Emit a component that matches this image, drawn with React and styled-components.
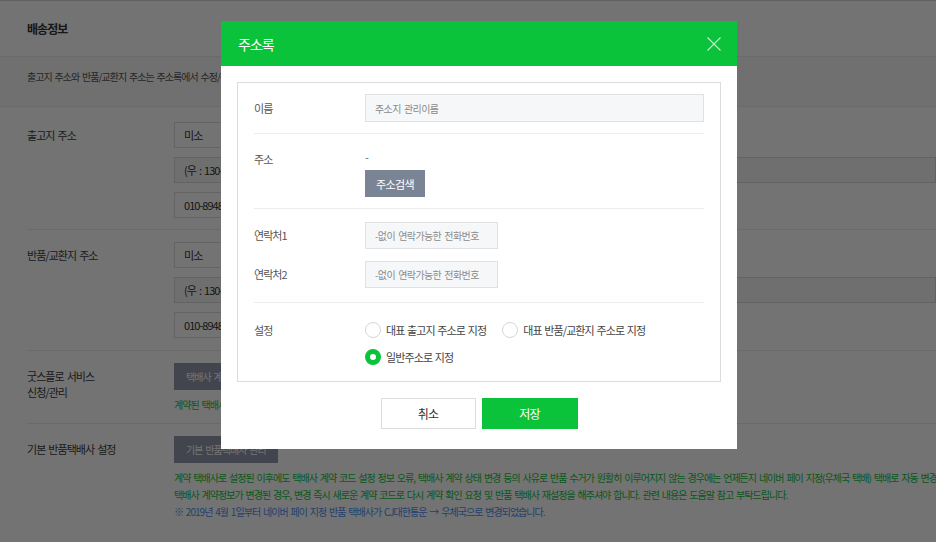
import React from 'react';
import styled, { createGlobalStyle } from 'styled-components';

const GlobalStyle = createGlobalStyle`
  html, body {
    margin: 0;
    padding: 0;
  }
  body {
    width: 936px;
    height: 542px;
    overflow: hidden;
    background: #fff;
    font-family: "Noto Sans CJK KR", "Noto Sans", sans-serif;
    color: #444;
    letter-spacing: -0.06em;
    word-spacing: 1.5px;
  }
  * {
    box-sizing: border-box;
  }
`;

const ShippingInfo = () => (
  <Page>
    <SectionHead>배송정보</SectionHead>
    <Notice>출고지 주소와 반품/교환지 주소는 주소록에서 수정/관리할 수 있습니다.</Notice>

    <FormRow $pad="15px 0 11px">
      <RowLabel>출고지 주소</RowLabel>
      <RowBody>
        <Field $w="300px">미소</Field>
        <Field $readonly>(우 : 130-070)</Field>
        <Field $w="300px">010-8948-0000</Field>
      </RowBody>
    </FormRow>

    <FormRow $pad="12px 0">
      <RowLabel>반품/교환지 주소</RowLabel>
      <RowBody>
        <Field $w="300px">미소</Field>
        <Field $readonly>(우 : 130-070)</Field>
        <Field $w="300px">010-8948-0000</Field>
      </RowBody>
    </FormRow>

    <FormRow $pad="12px 0 10px">
      <RowLabel>
        굿스플로 서비스
        <br />
        신청/관리
      </RowLabel>
      <RowBody>
        <DarkButton>택배사 계약 신청</DarkButton>
        <HelpText>
          <GreenLine>계약된 택배사가 없습니다.</GreenLine>
        </HelpText>
      </RowBody>
    </FormRow>

    <FormRow $pad="12px 0" $last>
      <RowLabel>기본 반품택배사 설정</RowLabel>
      <RowBody>
        <DarkButton>기본 반품택배사 관리</DarkButton>
        <HelpText>
          <GreenLine>
            계약 택배사로 설정된 이후에도 택배사 계약 코드 설정 정보 오류, 택배사 계약 상태 변경 등의 사유로 반품 수거가
            원활히 이루어지지 않는 경우에는 언제든지 네이버 페이 지정(우체국 택배) 택배로 자동 변경됩니다.
          </GreenLine>
          <GreenLine>
            택배사 계약정보가 변경된 경우, 변경 즉시 새로운 계약 코드로 다시 계약 확인 요청 및 반품 택배사 재설정을
            해주셔야 합니다. 관련 내용은 도움말 참고 부탁드립니다.
          </GreenLine>
          <BlueLine>※ 2019년 4월 1일부터 네이버 페이 지정 반품 택배사가 CJ대한통운 → 우체국으로 변경되었습니다.</BlueLine>
        </HelpText>
      </RowBody>
    </FormRow>
  </Page>
);

const CloseIcon = () => (
  <svg width="14" height="14" viewBox="0 0 14 14">
    <path d="M0.5 0.5 L13.5 13.5 M13.5 0.5 L0.5 13.5" stroke="rgba(255,255,255,0.75)" strokeWidth="1.1" fill="none" />
  </svg>
);

const AddressBookModal = () => (
  <Modal>
    <ModalHead>
      <ModalTitle>주소록</ModalTitle>
      <CloseButton type="button">
        <CloseIcon />
      </CloseButton>
    </ModalHead>
    <ModalBody>
      <FieldBox>
        <BoxRow $pad="11px 0">
          <Line>
            <BoxLabel>이름</BoxLabel>
            <BoxInput $w="339px" $h="28px" placeholder="주소지 관리이름" />
          </Line>
        </BoxRow>

        <BoxRow $pad="12px 0 11px">
          <Line>
            <BoxLabel $lh="26px">주소</BoxLabel>
            <AddressCol>
              <Dash>-</Dash>
              <SearchButton type="button">주소검색</SearchButton>
            </AddressCol>
          </Line>
        </BoxRow>

        <BoxRow $pad="13px 0 14px" $gap="12px">
          <Line>
            <BoxLabel $lh="27px">연락처1</BoxLabel>
            <BoxInput $w="133px" $h="27px" placeholder="-없이 연락가능한 전화번호" />
          </Line>
          <Line>
            <BoxLabel $lh="27px">연락처2</BoxLabel>
            <BoxInput $w="133px" $h="27px" placeholder="-없이 연락가능한 전화번호" />
          </Line>
        </BoxRow>

        <BoxRow $pad="19px 0 16px" $last>
          <Line>
            <BoxLabel $lh="16px">설정</BoxLabel>
            <RadioGroup>
              <RadioLine>
                <RadioOption>
                  <RadioDot />
                  대표 출고지 주소로 지정
                </RadioOption>
                <RadioOption>
                  <RadioDot />
                  대표 반품/교환지 주소로 지정
                </RadioOption>
              </RadioLine>
              <RadioLine>
                <RadioOption>
                  <RadioDot $checked />
                  일반주소로 지정
                </RadioOption>
              </RadioLine>
            </RadioGroup>
          </Line>
        </BoxRow>
      </FieldBox>

      <Actions>
        <CancelButton type="button">취소</CancelButton>
        <SaveButton type="button">저장</SaveButton>
      </Actions>
    </ModalBody>
  </Modal>
);

const App = () => (
  <>
    <GlobalStyle />
    <ShippingInfo />
    <Dim />
    <AddressBookModal />
  </>
);

export default App;

/* background page */
const Page = styled.div`
  width: 936px;
  height: 542px;
  border-top: 1px solid #d8d8d8;
`;
const SectionHead = styled.div`
  height: 56px;
  padding-left: 27px;
  display: flex;
  align-items: center;
  font-size: 12px;
  font-weight: bold;
  color: #333;
  border-bottom: 1px solid #ebebeb;
`;
const Notice = styled.div`
  height: 50px;
  padding: 11px 27px 0;
  line-height: 18px;
  font-size: 10px;
  color: #555;
  background: #f8f8f8;
  border-bottom: 1px solid #ebebeb;
`;
const FormRow = styled.div`
  display: flex;
  margin-left: 27px;
  padding: ${(p) => p.$pad};
  border-bottom: ${(p) => (p.$last ? 'none' : '1px solid #ebebeb')};
`;
const RowLabel = styled.div`
  width: 147px;
  flex-shrink: 0;
  padding-top: 5px;
  line-height: 16px;
  font-size: 11px;
  color: #3c3c3c;
`;
const RowBody = styled.div`
  flex: 1;
  min-width: 0;
  display: flex;
  flex-direction: column;
  align-items: flex-start;
  gap: 9px;
`;
const Field = styled.div`
  width: ${(p) => p.$w || '100%'};
  height: 26px;
  padding: 0 9px;
  display: flex;
  align-items: center;
  font-size: 11px;
  color: #333;
  border: 1px solid #dcdcdc;
  background: ${(p) => (p.$readonly ? '#f6f6f6' : '#fff')};
  white-space: nowrap;
`;
const DarkButton = styled.div`
  height: 27px;
  padding: 0 12px;
  display: flex;
  align-items: center;
  font-size: 10px;
  color: #fff;
  background: #929aae;
`;
const HelpText = styled.div`
  margin-top: -3px;
  white-space: nowrap;
  font-size: 10px;
  line-height: 17px;
`;
const GreenLine = styled.div`
  color: #14c23c;
`;
const BlueLine = styled.div`
  color: #4f8ef0;
`;

const Dim = styled.div`
  position: fixed;
  inset: 0;
  background: rgba(0, 0, 0, 0.55);
`;

/* address book modal */
const Modal = styled.div`
  position: absolute;
  left: 221px;
  top: 21px;
  width: 516px;
  background: #fff;
`;
const ModalHead = styled.div`
  height: 45px;
  padding: 0 16px 0 17px;
  display: flex;
  align-items: center;
  justify-content: space-between;
  background: #0bc23b;
`;
const ModalTitle = styled.h2`
  margin: 0;
  font-size: 14px;
  font-weight: normal;
  color: #fff;
`;
const CloseButton = styled.button`
  padding: 0;
  border: 0;
  background: none;
  display: flex;
`;
const ModalBody = styled.div`
  padding: 16px 16px 20px;
`;
const FieldBox = styled.div`
  padding: 0 16px;
  border: 1px solid #dcdcdc;
`;
const BoxRow = styled.div`
  display: flex;
  flex-direction: column;
  gap: ${(p) => p.$gap || '0'};
  padding: ${(p) => p.$pad};
  border-bottom: ${(p) => (p.$last ? 'none' : '1px solid #ececec')};
`;
const Line = styled.div`
  display: flex;
  align-items: flex-start;
`;
const BoxLabel = styled.div`
  width: 111px;
  flex-shrink: 0;
  line-height: ${(p) => p.$lh || '28px'};
  font-size: 11px;
  color: #555;
`;
const BoxInput = styled.input`
  width: ${(p) => p.$w};
  height: ${(p) => p.$h};
  padding: 0 9px;
  font-family: inherit;
  font-size: 10px;
  letter-spacing: -0.06em;
  word-spacing: 1.5px;
  color: #333;
  background: #f6f7f9;
  border: 1px solid #dfe1e5;
  outline: none;
  &::placeholder {
    color: #8a8a8a;
  }
`;
const AddressCol = styled.div`
  display: flex;
  flex-direction: column;
  align-items: flex-start;
`;
const Dash = styled.div`
  line-height: 22px;
  font-size: 11px;
  color: #4f6b8f;
`;
const SearchButton = styled.button`
  margin-top: 2px;
  height: 27px;
  padding: 0 11px;
  font-family: inherit;
  font-size: 11px;
  letter-spacing: -0.06em;
  color: #fff;
  background: #7b8494;
  border: 0;
`;
const RadioGroup = styled.div`
  display: flex;
  flex-direction: column;
  gap: 11px;
`;
const RadioLine = styled.div`
  display: flex;
  gap: 16px;
`;
const RadioOption = styled.label`
  display: flex;
  align-items: center;
  gap: 5px;
  height: 16px;
  font-size: 11px;
  letter-spacing: -0.08em;
  word-spacing: 1px;
  color: #444;
`;
const RadioDot = styled.span`
  width: 16px;
  height: 16px;
  border-radius: 50%;
  background: #fff;
  border: ${(p) => (p.$checked ? '5px solid #0bc23b' : '1px solid #d6d6d6')};
`;
const Actions = styled.div`
  margin-top: 16px;
  display: flex;
  justify-content: center;
  gap: 6px;
`;
const CancelButton = styled.button`
  width: 95px;
  height: 31px;
  font-family: inherit;
  font-size: 12px;
  letter-spacing: -0.06em;
  color: #333;
  background: #fff;
  border: 1px solid #dcdcdc;
`;
const SaveButton = styled(CancelButton)`
  width: 96px;
  color: #fff;
  background: #0bc23b;
  border-color: #0bc23b;
`;
